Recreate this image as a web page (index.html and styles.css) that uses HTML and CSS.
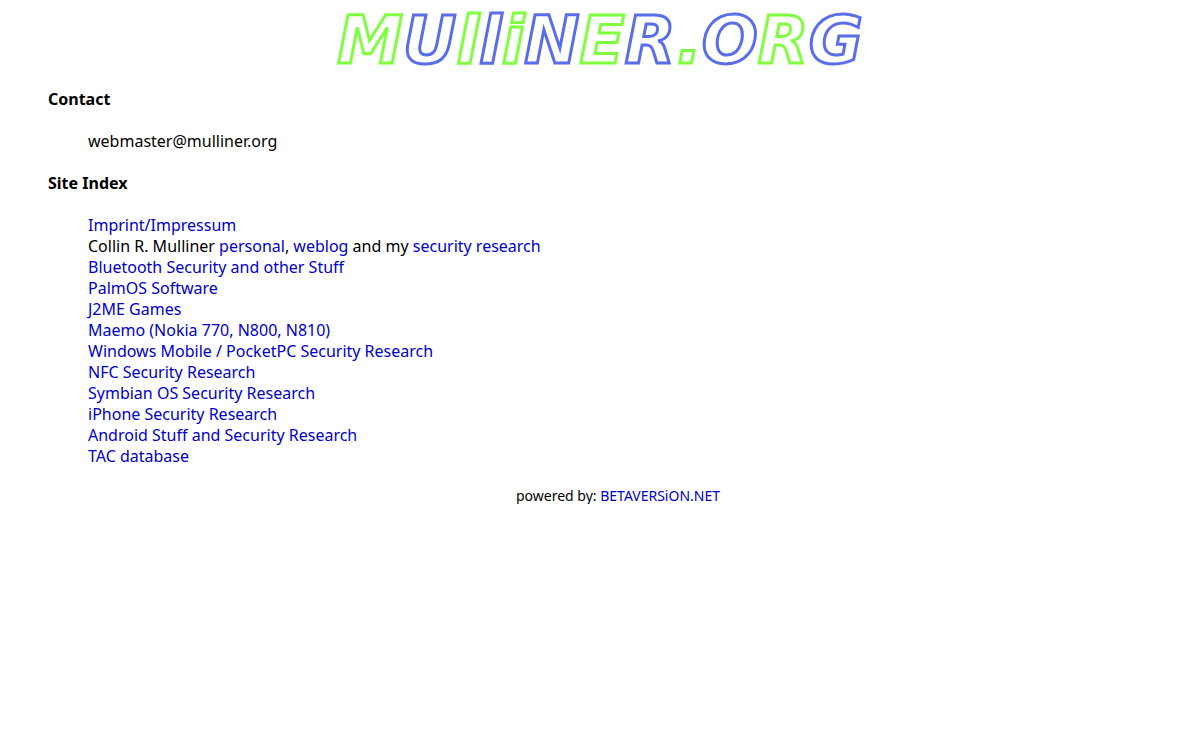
FILE: index.html
```html
<!DOCTYPE html>
<html lang="en">
<head>
<meta charset="utf-8">
<title>MUlliNER.ORG</title>
<link rel="stylesheet" href="styles.css">
</head>
<body>
<header>
<h1 class="logo"><span class="green">M</span><span class="blue">U</span><span class="green">l</span><span class="blue">l</span><span class="green">i</span><span class="blue">N</span><span class="green">E</span><span class="blue">R</span><span class="green">.</span><span class="blue">O</span><span class="green">R</span><span class="blue">G</span></h1>
</header>
<main class="content">
<h2 class="heading">Contact</h2>
<p class="entry">webmaster@mulliner.org</p>
<h2 class="heading">Site Index</h2>
<ul class="entry">
<li><a href="#imprint">Imprint/Impressum</a></li>
<li>Collin R. Mulliner <a href="#personal">personal</a>, <a href="#weblog">weblog</a> and my <a href="#research">security research</a></li>
<li><a href="#bluetooth">Bluetooth Security and other Stuff</a></li>
<li><a href="#palmos">PalmOS Software</a></li>
<li><a href="#j2me">J2ME Games</a></li>
<li><a href="#maemo">Maemo (Nokia 770, N800, N810)</a></li>
<li><a href="#windows">Windows Mobile / PocketPC Security Research</a></li>
<li><a href="#nfc">NFC Security Research</a></li>
<li><a href="#symbian">Symbian OS Security Research</a></li>
<li><a href="#iphone">iPhone Security Research</a></li>
<li><a href="#android">Android Stuff and Security Research</a></li>
<li><a href="#tac">TAC database</a></li>
</ul>
<footer class="footer">powered by: <a href="#betaversion">BETAVERSiON.NET</a></footer>
</main>
</body>
</html>
```
FILE: styles.css
```css
body {
  margin: 8px;
  background: #fff;
  color: #000;
  font: 16px/21px "Noto Sans", "Open Sans", sans-serif;
}
a {
  color: #0000cc;
  text-decoration: none;
}
.logo {
  margin: 0;
  text-align: center;
  font: italic bold 66px/66px "DejaVu Sans", sans-serif;
  color: #fff;
  -webkit-text-stroke-width: 3px;
}
.green {
  -webkit-text-stroke-color: #80ff40;
}
.blue {
  -webkit-text-stroke-color: #5a6eea;
}
.content {
  padding: 15px 0 0 40px;
}
.heading {
  margin: 0 0 21px;
  font-size: 16px;
  line-height: 21px;
}
.entry {
  margin: 0 0 21px;
  padding: 0 0 0 40px;
  list-style: none;
}
.footer {
  padding-right: 4px;
  text-align: center;
  font-size: 14px;
  line-height: 16px;
}
```
